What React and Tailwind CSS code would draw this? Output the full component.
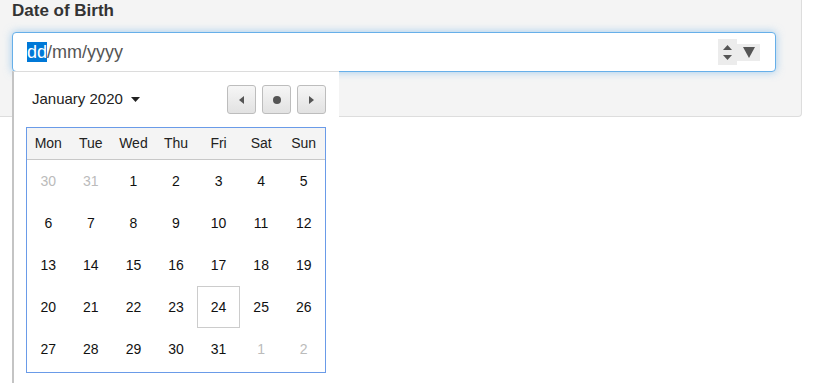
import React from 'react';

const weeks = [
  [[30, true], [31, true], [1], [2], [3], [4], [5]],
  [[6], [7], [8], [9], [10], [11], [12]],
  [[13], [14], [15], [16], [17], [18], [19]],
  [[20], [21], [22], [23], [24], [25], [26]],
  [[27], [28], [29], [30], [31], [1, true], [2, true]],
];

const dayNames = ['Mon', 'Tue', 'Wed', 'Thu', 'Fri', 'Sat', 'Sun'];

const NavButton = ({ children }) => (
  <button className="w-[29px] h-[29px] flex items-center justify-center rounded-[3px] border border-[#bdbdbd] bg-gradient-to-b from-[#f6f6f6] to-[#e2e2e2]">
    {children}
  </button>
);

export default function App() {
  return (
    <div className="relative w-[839px] h-[383px] overflow-hidden bg-white" style={{ fontFamily: '"Liberation Sans", Arial, sans-serif' }}>
      {/* Form panel */}
      <div className="w-[802px] h-[117px] bg-[#f4f4f4] border-r border-b border-[#dddddd] rounded-br-[4px] pl-[12px] pr-[25px]">
        <div className="text-[17px] leading-[22px] font-bold text-[#333]">Date of Birth</div>
        <div className="mt-[10px] h-[40px] flex items-center bg-white border border-[#66afe9] rounded-[4px] shadow-[0_0_8px_rgba(102,175,233,0.6)] pl-[14px] pr-[15px]">
          <div className="flex-1 text-[18px] text-[#555]">
            <span className="bg-[#0078d7] text-white">dd</span>/mm/yyyy
          </div>
          <div className="flex items-center">
            <div className="w-[19px] h-[26px] bg-[#ececec] flex flex-col items-center justify-center gap-[5px]">
              <svg width="9" height="5" viewBox="0 0 9 5"><path d="M0 5 L4.5 0 L9 5 Z" fill="#555" /></svg>
              <svg width="9" height="5" viewBox="0 0 9 5"><path d="M0 0 L4.5 5 L9 0 Z" fill="#555" /></svg>
            </div>
            <div className="w-[23px] h-[17px] bg-[#ececec] flex items-center justify-center">
              <svg width="12" height="11" viewBox="0 0 12 11"><path d="M0 0 L12 0 L6 11 Z" fill="#555" /></svg>
            </div>
          </div>
        </div>
      </div>

      {/* Date picker popup */}
      <div className="absolute left-[12px] top-[71px] w-[327px] h-[330px] bg-white border-l-2 border-t border-l-[#c4c4c4] border-t-[#dcdcdc] pl-[12px] pr-[13px] pt-[13px]">
        <div className="flex items-center justify-between mb-[13px]">
          <div className="pl-[6px] flex items-center gap-[8px] text-[15px] text-[#222]">
            <span>January 2020</span>
            <svg width="9" height="5" viewBox="0 0 9 5"><path d="M0 0 L9 0 L4.5 5 Z" fill="#222" /></svg>
          </div>
          <div className="flex gap-[6px]">
            <NavButton>
              <svg width="5" height="8" viewBox="0 0 5 8"><path d="M5 0 L0 4 L5 8 Z" fill="#555" /></svg>
            </NavButton>
            <NavButton>
              <svg width="8" height="8" viewBox="0 0 8 8"><circle cx="4" cy="4" r="4" fill="#555" /></svg>
            </NavButton>
            <NavButton>
              <svg width="5" height="8" viewBox="0 0 5 8"><path d="M0 0 L5 4 L0 8 Z" fill="#555" /></svg>
            </NavButton>
          </div>
        </div>

        <div className="w-[300px] border border-[#6a9be8] pb-[2px] text-[14px]">
          <div className="grid grid-cols-7 h-[32px] bg-[#f4f4f4] border-b border-[#c8c8c8] text-[#222]">
            {dayNames.map((d) => (
              <div key={d} className="flex items-center justify-center">{d}</div>
            ))}
          </div>
          {weeks.map((week, wi) => (
            <div key={wi} className="grid grid-cols-7">
              {week.map(([n, muted], di) => (
                <div
                  key={di}
                  className={`h-[42px] flex items-center justify-center ${muted ? 'text-[#bbbbbb]' : 'text-[#111]'} ${n === 24 && !muted ? 'border border-[#cccccc]' : ''}`}
                >
                  {n}
                </div>
              ))}
            </div>
          ))}
        </div>
      </div>
    </div>
  );
}
